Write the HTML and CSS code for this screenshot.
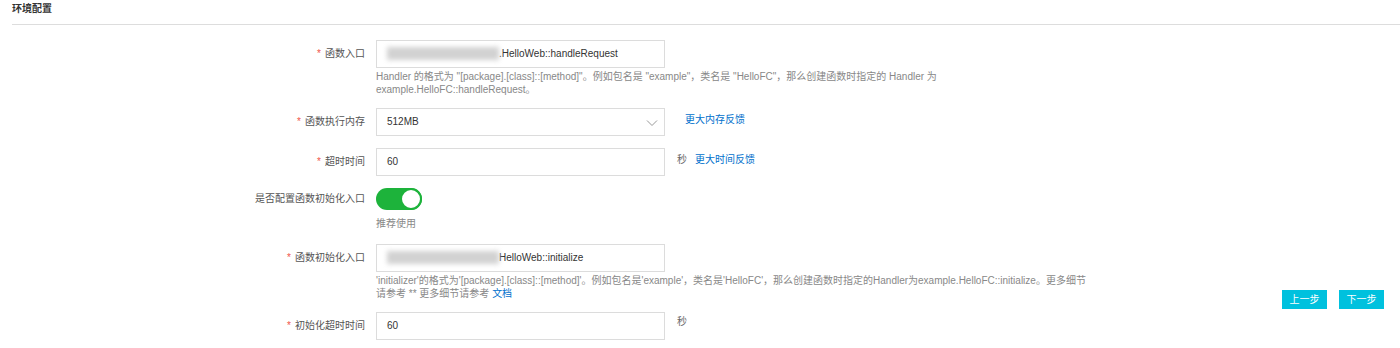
FILE: index.html
```html
<!DOCTYPE html>
<html lang="zh-CN">
<head>
    <meta charset="UTF-8">
    <title>环境配置</title>
<link rel="stylesheet" href="styles.css">
</head>
<body>
    <div class="section-title">环境配置</div>

    <div class="main">
        <div class="form">
            <div class="form-item">
                <div class="label"><span class="req">*</span>函数入口</div>
                <div class="control">
                    <div class="field-line">
                        <div class="input"><span class="blur"></span>.HelloWeb::handleRequest</div>
                    </div>
                    <div class="help">Handler 的格式为 "[package].[class]::[method]"。例如包名是 "example"，类名是 "HelloFC"，那么创建函数时指定的 Handler 为<br>example.HelloFC::handleRequest。</div>
                </div>
            </div>

            <div class="form-item">
                <div class="label"><span class="req">*</span>函数执行内存</div>
                <div class="control">
                    <div class="field-line">
                        <div class="input select">512MB
                            <svg class="arrow" width="12" height="8" viewBox="0 0 12 8"><path d="M1 1.5 L6 6.5 L11 1.5" fill="none" stroke="#999" stroke-width="1"/></svg>
                        </div>
                        <a class="link first-link" href="#">更大内存反馈</a>
                    </div>
                </div>
            </div>

            <div class="form-item">
                <div class="label"><span class="req">*</span>超时时间</div>
                <div class="control">
                    <div class="field-line">
                        <div class="input">60</div>
                        <span class="unit">秒</span>
                        <a class="link" href="#">更大时间反馈</a>
                    </div>
                </div>
            </div>

            <div class="form-item">
                <div class="label switch-label">是否配置函数初始化入口</div>
                <div class="control">
                    <div class="switch"><span class="knob"></span></div>
                    <div class="help switch-help">推荐使用</div>
                </div>
            </div>

            <div class="form-item">
                <div class="label"><span class="req">*</span>函数初始化入口</div>
                <div class="control">
                    <div class="field-line">
                        <div class="input"><span class="blur"></span>HelloWeb::initialize</div>
                    </div>
                    <div class="help">'initializer'的格式为'[package].[class]::[method]'。例如包名是'example'，类名是'HelloFC'，那么创建函数时指定的Handler为example.HelloFC::initialize。更多细节<br>请参考 ** 更多细节请参考 <a class="link" href="#">文档</a></div>
                </div>
            </div>

            <div class="form-item">
                <div class="label"><span class="req">*</span>初始化超时时间</div>
                <div class="control">
                    <div class="field-line top">
                        <div class="input">60</div>
                        <span class="unit">秒</span>
                    </div>
                </div>
            </div>
        </div>

        <div class="actions">
            <button class="btn">上一步</button>
            <button class="btn">下一步</button>
        </div>
    </div>
</body>
</html>
```

FILE: styles.css
```css
*{
    margin: 0;
    padding: 0;
    box-sizing: border-box;
}
body{
    font-family: "Liberation Sans", "Noto Sans CJK SC", sans-serif;
    font-size: 10px;
    color: #333;
    background: #fff;
    overflow: hidden;
}
.section-title{
    margin-left: 12px;
    padding-top: 2px;
    height: 25px;
    line-height: 14px;
    font-weight: bold;
    color: #333;
    border-bottom: 1px solid #ddd;
}
.main{
    display: flex;
    padding: 15px 16px 0 12px;
}
.form{
    flex: 1;
}
.form-item{
    display: flex;
    margin-bottom: 12px;
}
.label{
    width: 354px;
    height: 28px;
    line-height: 28px;
    text-align: right;
    padding-right: 1px;
    color: #555;
}
.switch-label{
    height: 22px;
    line-height: 22px;
}
.req{
    color: #f0554a;
    margin-right: 4px;
}
.control{
    margin-left: 10px;
}
.field-line{
    display: flex;
    align-items: center;
}
.field-line.top{
    align-items: flex-start;
}
.input{
    position: relative;
    width: 289px;
    height: 28px;
    line-height: 26px;
    border: 1px solid #dcdcdc;
    padding-left: 10px;
    color: #333;
    white-space: nowrap;
}
.blur{
    display: inline-block;
    vertical-align: middle;
    width: 112px;
    height: 13px;
    margin-top: -2px;
    background: #d2d2d2;
    filter: blur(2.5px);
}
.arrow{
    position: absolute;
    right: 6px;
    top: 10px;
}
.unit{
    margin-left: 12px;
    margin-top: -8px;
    color: #666;
}
.field-line.top .unit{
    margin-top: 0;
    line-height: 20px;
}
.link{
    color: #0070cc;
    text-decoration: none;
    margin-left: 8px;
}
.first-link{
    margin-left: 20px;
}
.field-line .link{
    margin-top: -8px;
}
.help .link{
    margin-left: 0;
}
.help{
    padding-top: 2px;
    line-height: 13px;
    color: #888;
    white-space: nowrap;
}
.switch{
    position: relative;
    width: 46px;
    height: 22px;
    border-radius: 11px;
    background: #1db33b;
}
.knob{
    position: absolute;
    right: 0;
    top: 0;
    width: 22px;
    height: 22px;
    border-radius: 50%;
    background: #fff;
    border: 2px solid #1db33b;
}
.switch-help{
    padding-top: 7px;
    margin-bottom: 2px;
}
.actions{
    align-self: flex-end;
    display: flex;
    gap: 12px;
    margin-bottom: 43px;
}
.btn{
    width: 45px;
    height: 19px;
    border: none;
    background: #00c1de;
    color: #fff;
    font-family: "Liberation Sans", "Noto Sans CJK SC", sans-serif;
    font-size: 10px;
    line-height: 19px;
}
```
